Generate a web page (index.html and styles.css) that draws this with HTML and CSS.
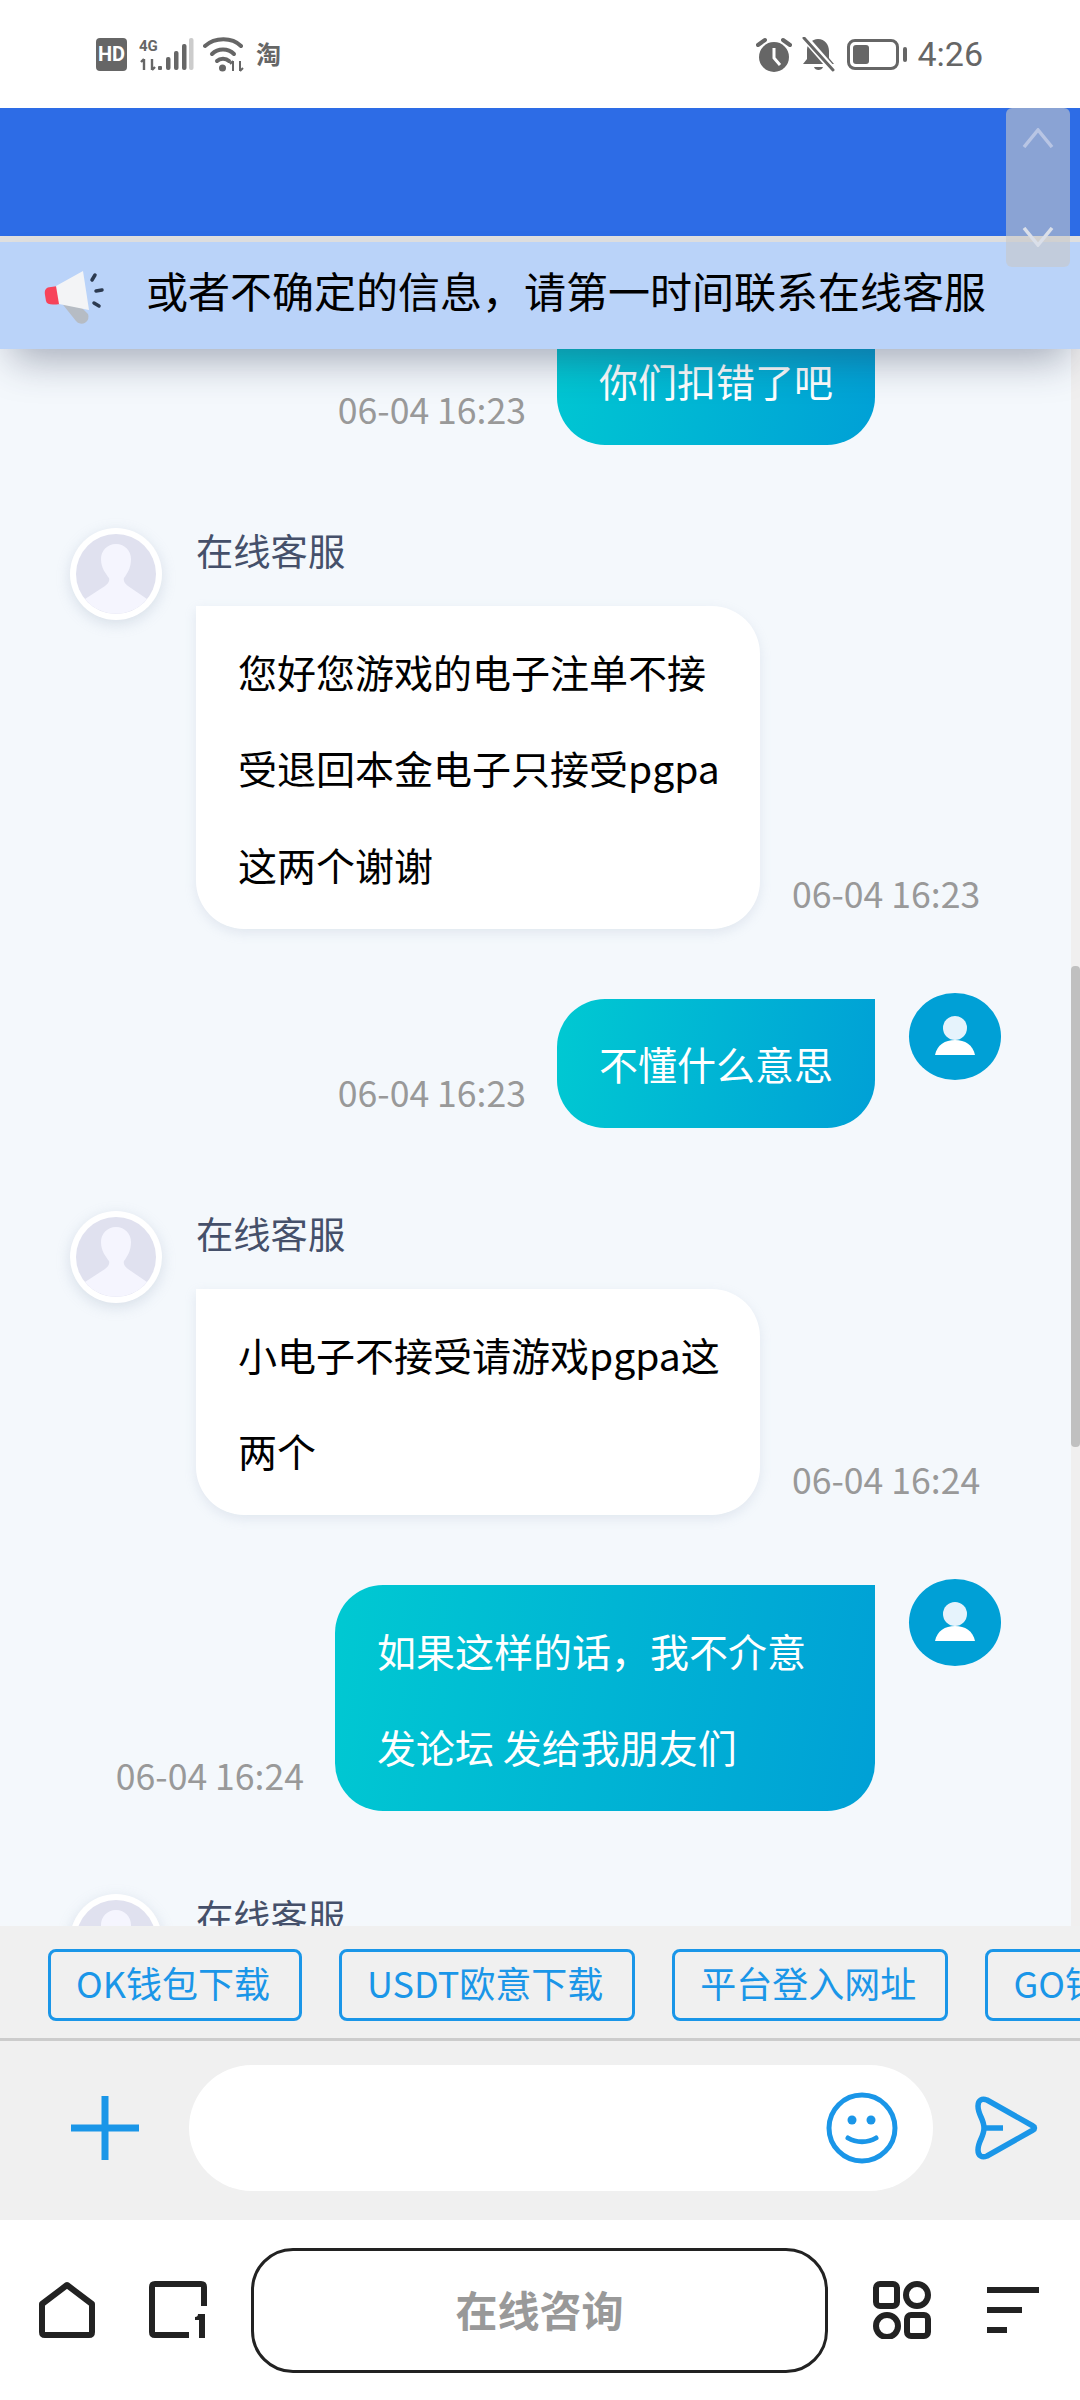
FILE: index.html
```html
<!DOCTYPE html>
<html lang="zh">
<head>
    <meta charset="UTF-8">
    <meta name="viewport" content="width=device-width, initial-scale=1.0">
    <title>在线客服</title>
    <link rel="stylesheet" href="styles.css">
</head>
<body>
    <div class="page">

        <!-- status bar -->
        <div class="status">
            <div class="status-left">
                <span class="hd">HD</span>
                <svg class="ic-signal" width="57" height="35" viewBox="0 0 57 35">
                    <text x="0" y="14" class="net">4G</text>
                    <path d="M5 22v11M2 25l3-3M13 33V22M16 30l-3 3" fill="none" stroke="#666" stroke-width="2.4"/>
                    <rect x="19" y="29" width="4" height="4" rx="1" fill="#666"/>
                    <rect x="27" y="20" width="4.500" height="13" rx="2" fill="#666"/>
                    <rect x="35" y="14" width="4.500" height="19" rx="2" fill="#666"/>
                    <rect x="43" y="7" width="4.500" height="26" rx="2" fill="#666"/>
                    <rect x="50" y="1" width="4.500" height="32" rx="2" fill="#ccc"/>
                </svg>
                <svg class="ic-wifi" width="42" height="35" viewBox="0 0 42 35">
                    <g fill="none" stroke="#666" stroke-width="4" stroke-linecap="round">
                        <path d="M2 9C12 0 29 0 38 9"/>
                        <path d="M9 17C15 11 25 11 31 17"/>
                        <path d="M14 24C17 21 23 21 26 24"/>
                    </g>
                    <circle cx="19.500" cy="31" r="3.500" fill="#666"/>
                    <path d="M30 24v10M27 27l3-3M37 34V24M40 31l-3 3" fill="none" stroke="#666" stroke-width="2"/>
                </svg>
                <span class="tao">淘</span>
            </div>
            <div class="status-right">
                <svg class="ic-alarm" width="36" height="35" viewBox="0 0 36 35">
                    <circle cx="18" cy="20" r="15" fill="#666"/>
                    <path d="M18 11v10l6 7" fill="none" stroke="#fff" stroke-width="3"/>
                    <path d="M2 8l7-5M34 8l-7-5" stroke="#666" stroke-width="4" stroke-linecap="round"/>
                </svg>
                <svg class="ic-bell" width="33" height="35" viewBox="0 0 33 35">
                    <path d="M16 2c7 0 11 6 11 12v7l5 6H1l4-5V13C5 7 10 2 16 2zM12 30h9c-1 4-8 4-9 0z" fill="#666"/>
                    <path d="M3 1l28 32" stroke="#fff" stroke-width="7"/>
                    <path d="M2 1l29 32" stroke="#666" stroke-width="3" stroke-linecap="round"/>
                </svg>
                <div class="battery"><div class="battery-level"></div></div>
                <div class="battery-nub"></div>
                <span class="clock">4:26</span>
            </div>
        </div>

        <div class="topbar"></div>
        <div class="topline"></div>

        <div class="notice">
            <svg class="ic-horn" width="120" height="90" viewBox="0 0 120 90">
                <path d="M40 53l13-2 15 15a7 7 0 0 1-12 7z" transform="translate(0 -3)" fill="#b6bcc4"/>
                <path d="M31 36c-5 0-7 3-6 8l1 6c1 4 6 4 14 3l-2-18z" fill="#f7435a"/>
                <path d="M36 35l27-15 6 39-30-6z" fill="#f3f4f6"/>
                <path d="M72 29l3-5M76 40l6-1M74 52l5 3" stroke="#2c3a50" stroke-width="3.500" stroke-linecap="round"/>
            </svg>
            <span class="notice-text">或者不确定的信息，请第一时间联系在线客服</span>
        </div>

        <!-- chat list, clipped above by the notice and below by the chips -->
        <div class="chat">
            <div class="msg-list">

                <div class="msg msg-me">
                    <span class="time">06-04 16:23</span>
                    <div class="bubble bubble-me bubble-clipped">你们扣错了吧</div>
                    <div class="avatar-me">
                        <svg width="92" height="87" viewBox="0 0 92 87"><circle cx="46" cy="35" r="12" fill="#e6f3fc"/><path d="M26 62c2-10 10-15 20-15s18 5 20 15z" fill="#fff"/></svg>
                    </div>
                </div>

                <div class="msg msg-kf">
                    <div class="avatar-kf">
                        <svg width="80" height="80" viewBox="0 0 80 80"><circle cx="40" cy="40" r="40" fill="#e0e1ef"/><path d="M40 10c9 0 15 7 15 15 0 9-4 15-7 19-1 3 1 6 4 8l19 13A40 40 0 0 1 9 65l20-13c3-2 5-5 4-8-3-4-8-10-8-19 0-8 6-15 15-15z" fill="#f5f5fe"/></svg>
                    </div>
                    <div class="kf-body">
                        <div class="kf-name">在线客服</div>
                        <div class="kf-line">
                            <div class="bubble bubble-kf">您好您游戏的电子注单不接受退回本金电子只接受pgpa这两个谢谢</div>
                            <span class="time">06-04 16:23</span>
                        </div>
                    </div>
                </div>

                <div class="msg msg-me">
                    <span class="time">06-04 16:23</span>
                    <div class="bubble bubble-me">不懂什么意思</div>
                    <div class="avatar-me">
                        <svg width="92" height="87" viewBox="0 0 92 87"><circle cx="46" cy="35" r="12" fill="#e6f3fc"/><path d="M26 62c2-10 10-15 20-15s18 5 20 15z" fill="#fff"/></svg>
                    </div>
                </div>

                <div class="msg msg-kf">
                    <div class="avatar-kf">
                        <svg width="80" height="80" viewBox="0 0 80 80"><circle cx="40" cy="40" r="40" fill="#e0e1ef"/><path d="M40 10c9 0 15 7 15 15 0 9-4 15-7 19-1 3 1 6 4 8l19 13A40 40 0 0 1 9 65l20-13c3-2 5-5 4-8-3-4-8-10-8-19 0-8 6-15 15-15z" fill="#f5f5fe"/></svg>
                    </div>
                    <div class="kf-body">
                        <div class="kf-name">在线客服</div>
                        <div class="kf-line">
                            <div class="bubble bubble-kf">小电子不接受请游戏pgpa这两个</div>
                            <span class="time">06-04 16:24</span>
                        </div>
                    </div>
                </div>

                <div class="msg msg-me">
                    <span class="time">06-04 16:24</span>
                    <div class="bubble bubble-me">如果这样的话，我不介意发论坛 发给我朋友们</div>
                    <div class="avatar-me">
                        <svg width="92" height="87" viewBox="0 0 92 87"><circle cx="46" cy="35" r="12" fill="#e6f3fc"/><path d="M26 62c2-10 10-15 20-15s18 5 20 15z" fill="#fff"/></svg>
                    </div>
                </div>

                <div class="msg msg-kf">
                    <div class="avatar-kf">
                        <svg width="80" height="80" viewBox="0 0 80 80"><circle cx="40" cy="40" r="40" fill="#e0e1ef"/><path d="M40 10c9 0 15 7 15 15 0 9-4 15-7 19-1 3 1 6 4 8l19 13A40 40 0 0 1 9 65l20-13c3-2 5-5 4-8-3-4-8-10-8-19 0-8 6-15 15-15z" fill="#f5f5fe"/></svg>
                    </div>
                    <div class="kf-body">
                        <div class="kf-name">在线客服</div>
                    </div>
                </div>

            </div>
            <div class="scroll-track"><div class="scroll-thumb"></div></div>
        </div>

        <div class="chips">
            <a class="chip">OK钱包下载</a>
            <a class="chip">USDT欧意下载</a>
            <a class="chip">平台登入网址</a>
            <a class="chip">GO钱包下载</a>
        </div>

        <div class="composer">
            <svg class="ic-plus" width="68" height="64" viewBox="0 0 68 64">
                <path d="M34 0v64M0 32h68" stroke="#1a96e8" stroke-width="7"/>
            </svg>
            <div class="input-box">
                <svg width="72" height="72" viewBox="0 0 72 72">
                    <circle cx="36" cy="36" r="33" fill="none" stroke="#1a96e8" stroke-width="5"/>
                    <circle cx="26" cy="28" r="4.500" fill="#1a96e8"/>
                    <circle cx="45" cy="28" r="4.500" fill="#1a96e8"/>
                    <path d="M22 46c8 5 20 5 28 0" fill="none" stroke="#1a96e8" stroke-width="5" stroke-linecap="round"/>
                </svg>
            </div>
            <svg class="ic-send" width="64" height="64" viewBox="0 0 64 64">
                <path d="M3 10c0-6 4-8 9-6l46 26c2 1 2 3 0 4L12 60c-5 2-9 0-9-6 0-9 6-13 6-22S3 19 3 10zM9 32h19" fill="none" stroke="#1a96e8" stroke-width="5.500" stroke-linejoin="round"/>
            </svg>
        </div>

        <div class="nav">
            <svg class="ic-home" width="58" height="58" viewBox="0 0 58 58">
                <path d="M29 4l25 19v28c0 2-1 3-3 3H7c-2 0-3-1-3-3V23z" fill="none" stroke="#222" stroke-width="6" stroke-linejoin="round"/>
            </svg>
            <svg class="ic-tabs" width="58" height="58" viewBox="0 0 58 58">
                <path d="M40 54H6c-2 0-3-1-3-3V6c0-2 1-3 3-3h46c2 0 3 1 3 3v19" fill="none" stroke="#222" stroke-width="6"/>
                <path d="M49 33h7v24h-6V39h-4v-3c2 0 3-1 3-3z" fill="#222"/>
            </svg>
            <div class="consult">在线咨询</div>
            <svg class="ic-apps" width="58" height="58" viewBox="0 0 58 58">
                <g fill="none" stroke="#222" stroke-width="6">
                    <rect x="3" y="3" width="21" height="22" rx="4"/>
                    <circle cx="44" cy="14" r="11"/>
                    <circle cx="14" cy="45" r="11"/>
                    <rect x="34" y="34" width="21" height="21" rx="4"/>
                </g>
            </svg>
            <div class="ic-menu">
                <span class="bar bar-long"></span>
                <span class="bar bar-mid"></span>
                <span class="bar bar-short"></span>
            </div>
        </div>

        <!-- floating page up / down button -->
        <div class="float-btn">
            <svg width="32" height="20" viewBox="0 0 32 20"><path d="M2 19L16 2l14 17" fill="none" stroke="#b8c5e4" stroke-width="3.500"/></svg>
            <svg width="32" height="20" viewBox="0 0 32 20"><path d="M2 1l14 17L30 1" fill="none" stroke="#dadfe9" stroke-width="3.500"/></svg>
        </div>
    </div>
</body>
</html>
```

FILE: styles.css
```css
body {
    margin: 0;
    font-family: "Noto Sans CJK SC", "Noto Sans", sans-serif;
    background-color: #fff;
}

.page {
    position: relative;
    width: 1080px;
    height: 2400px;
    display: flex;
    flex-direction: column;
    overflow: hidden;
}

/* status bar */
.status {
    height: 108px;
    flex: none;
    display: flex;
    justify-content: space-between;
    align-items: center;
    padding: 0 97px 0 96px;
    box-sizing: border-box;
    color: #666;
}

.status-left, .status-right {
    display: flex;
    align-items: center;
}

.hd {
    width: 31px;
    height: 33px;
    background-color: #666;
    border-radius: 4px;
    color: #fff;
    font-family: "Roboto", sans-serif;
    font-size: 20px;
    font-weight: 700;
    line-height: 33px;
    text-align: center;
}

.net {
    font-family: "Roboto", sans-serif;
    font-size: 15px;
    font-weight: 700;
    fill: #666;
}

.ic-signal {
    margin-left: 12px;
}

.ic-wifi {
    margin-left: 7px;
}

.tao {
    margin: 0 0 2px 11px;
    font-size: 25px;
    font-weight: 700;
    line-height: 35px;
}

.ic-bell {
    margin-left: 10px;
}

.battery {
    width: 52px;
    height: 31px;
    margin-left: 12px;
    border: 3px solid #666;
    border-radius: 8px;
    box-sizing: border-box;
    padding: 3px;
}

.battery-level {
    width: 16px;
    height: 100%;
    background-color: #666;
    border-radius: 3px;
}

.battery-nub {
    width: 4px;
    height: 15px;
    margin-left: 4px;
    background-color: #666;
    border-radius: 2px;
}

.clock {
    margin-left: 10px;
    font-family: "Roboto", sans-serif;
    font-size: 34px;
    line-height: 35px;
}

/* top of the page */
.topbar {
    height: 128px;
    flex: none;
    background-color: #2d6ce6;
}

.topline {
    height: 6px;
    flex: none;
    background-color: #e0e0e0;
}

.notice {
    position: relative;
    z-index: 2;
    height: 107px;
    flex: none;
    display: flex;
    align-items: center;
    padding-left: 20px;
    background-color: #bad3f9;
    box-shadow: 0 22px 40px -12px rgba(40, 50, 80, 0.4);
}

.notice-text {
    margin-left: 6px;
    margin-bottom: 12px;
    font-size: 42px;
    color: #000;
    white-space: nowrap;
}

/* chat */
.chat {
    position: relative;
    flex: 1;
    min-height: 0;
    overflow: hidden;
    background-color: #f4f8fc;
}

.msg-list {
    margin-top: -137px;
    padding: 0 79px 0 70px;
}

.msg {
    display: flex;
}

.msg-me {
    justify-content: flex-end;
    margin-bottom: 83px;
}

.msg-kf {
    margin-bottom: 64px;
}

.time {
    flex: none;
    align-self: flex-end;
    margin-bottom: 12px;
    font-size: 35.600px;
    line-height: 48px;
    color: #999;
    white-space: nowrap;
}

.bubble {
    padding: 16.500px 42px;
    font-size: 39px;
    line-height: 96.500px;
    box-sizing: border-box;
}

.bubble-me {
    max-width: 540px;
    margin: 6px 34px 0 31px;
    color: #fff;
    background: linear-gradient(100deg, #00c9d2, #00a0d6);
    border-radius: 48px 0 48px 48px;
}

/* the first bubble starts higher up, under the notice */
.bubble-clipped {
    padding-top: 114px;
}

.bubble-kf {
    flex: none;
    width: 564px;
    padding-right: 36px;
    margin-right: 32px;
    color: #000;
    background-color: #fff;
    border-radius: 0 48px 48px 48px;
    box-shadow: 0 4px 12px rgba(150, 165, 190, 0.2);
}

.avatar-me {
    flex: none;
    width: 92px;
    height: 87px;
    background-color: #00a0d6;
    border-radius: 50%;
}

.avatar-kf {
    flex: none;
    width: 92px;
    height: 92px;
    margin-right: 34px;
    padding: 6px;
    box-sizing: border-box;
    background-color: #fff;
    border-radius: 50%;
    box-shadow: 0 4px 14px rgba(150, 165, 190, 0.3);
}

.avatar-kf svg {
    display: block;
}

.kf-name {
    margin: 0 0 34px 0;
    font-size: 37.300px;
    line-height: 44px;
    color: #45506a;
}

.kf-line {
    display: flex;
}

.scroll-track {
    position: absolute;
    top: 0;
    right: 0;
    bottom: 0;
    width: 9px;
    background-color: #f0efef;
}

.scroll-thumb {
    height: 481px;
    margin-top: 617px;
    background-color: #c0c0c0;
    border-radius: 4px;
}

/* quick links */
.chips {
    height: 115px;
    flex: none;
    display: flex;
    align-items: flex-start;
    gap: 37px;
    padding: 23px 0 0 48px;
    box-sizing: border-box;
    background-color: #f0f0f0;
    border-bottom: 3px solid #ccc;
    overflow: hidden;
}

.chip {
    flex: none;
    height: 72px;
    padding: 0 29px 0 25px;
    box-sizing: border-box;
    border: 3px solid #1a96e8;
    border-radius: 8px;
    font-size: 36px;
    line-height: 60px;
    color: #1a96e8;
}

/* input row */
.composer {
    height: 179px;
    flex: none;
    display: flex;
    align-items: center;
    padding: 0 0 5px 71px;
    box-sizing: border-box;
    background-color: #f0f0f0;
}

.input-box {
    width: 744px;
    height: 126px;
    margin-left: 50px;
    padding-right: 35px;
    display: flex;
    justify-content: flex-end;
    align-items: center;
    box-sizing: border-box;
    background-color: #fff;
    border-radius: 63px;
}

.ic-send {
    margin-left: 42px;
}

/* browser bar */
.nav {
    height: 180px;
    flex: none;
    display: flex;
    align-items: center;
    padding-left: 38px;
    background-color: #fff;
}

.ic-tabs {
    margin-left: 53px;
}

.consult {
    width: 577px;
    height: 125px;
    margin-left: 44px;
    box-sizing: border-box;
    border: 3px solid #222;
    border-radius: 42px;
    font-size: 42px;
    font-weight: 700;
    line-height: 115px;
    text-align: center;
    color: #999;
}

.ic-apps {
    margin-left: 45px;
}

.ic-menu {
    width: 52px;
    margin-left: 56px;
    display: flex;
    flex-direction: column;
    gap: 14px;
}

.bar {
    display: block;
    height: 6px;
    background-color: #222;
}

.bar-mid {
    width: 35px;
}

.bar-short {
    width: 20px;
}

.float-btn {
    position: absolute;
    top: 108px;
    left: 1006px;
    z-index: 3;
    width: 64px;
    height: 159px;
    padding: 20px 0;
    box-sizing: border-box;
    display: flex;
    flex-direction: column;
    justify-content: space-between;
    align-items: center;
    background-color: rgba(200, 200, 200, 0.6);
    border-radius: 6px;
}
```
